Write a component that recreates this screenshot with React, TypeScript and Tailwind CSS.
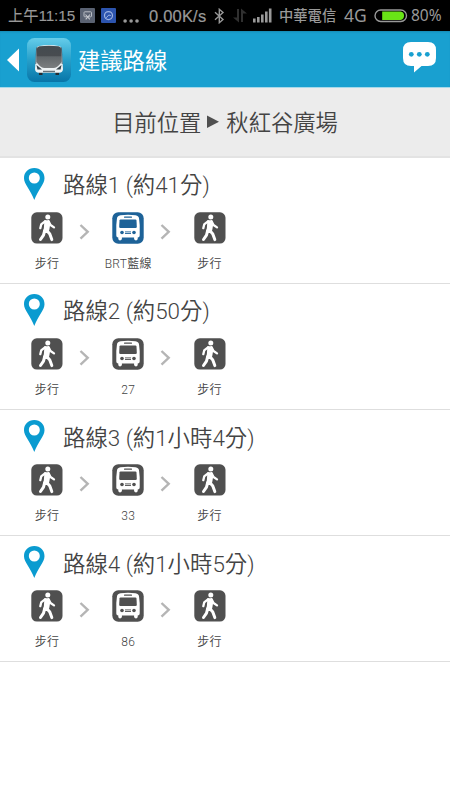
import { Fragment } from 'react';

type Step = { kind: 'walk' | 'bus' | 'brt'; label: string };

const walk: Step = { kind: 'walk', label: '步行' };

const routes: { title: string; steps: Step[] }[] = [
    { title: '路線1 (約41分)', steps: [walk, { kind: 'brt', label: 'BRT藍線' }, walk] },
    { title: '路線2 (約50分)', steps: [walk, { kind: 'bus', label: '27' }, walk] },
    { title: '路線3 (約1小時4分)', steps: [walk, { kind: 'bus', label: '33' }, walk] },
    { title: '路線4 (約1小時5分)', steps: [walk, { kind: 'bus', label: '86' }, walk] },
];

const WalkIcon = () => (
    <svg viewBox="0 0 32 32" className="size-8">
        <rect x="0.3" y="0.3" width="31.2" height="31.2" rx="5.5" fill="#505050" />
        <circle cx="16.8" cy="4.9" r="2.5" fill="#fff" />
        <path d="M13.4 8.3h4.6l1.3 3.8-1 5.6-1 3.3h-5.2l.8-5.5z" fill="#fff" />
        <g fill="none" stroke="#fff" strokeLinecap="round" strokeLinejoin="round">
            <path d="M14 9.3l-3.8 3.1-.9 3.8" strokeWidth="2.3" />
            <path d="M17.6 9.3l1.9 3.7 3.5 2.4" strokeWidth="2.3" />
            <path d="M13.7 18.5l-1.2 4.6-3 4.4" strokeWidth="3" />
            <path d="M15.8 18.5l3 3.5 2 5.6" strokeWidth="3" />
        </g>
    </svg>
);

const BusIcon = ({ color }: { color: string }) => (
    <svg viewBox="0 0 32 32" className="size-8">
        <rect x="0.3" y="0.3" width="31.4" height="31.4" rx="6" fill={color} />
        <path
            d="M8.5 3.2Q16 2.2 23.5 3.2Q27 3.7 27.1 7L27.7 13V23.4Q27.7 25.4 25.7 25.4V27Q25.4 28.4 24 28.4Q22.5 28.4 22.1 27V25.4H9.9V27Q9.5 28.4 8 28.4Q6.6 28.4 6.3 27V25.4Q4.3 25.4 4.3 23.4V13L4.9 7Q5 3.7 8.5 3.2Z"
            fill="#fff"
        />
        <rect x="12" y="4.6" width="8" height="1.1" rx=".5" fill={color} />
        <path d="M8.6 7.6H23.4Q24.4 7.6 24.5 8.6L24.8 14.8Q24.8 16 23.6 16H8.4Q7.2 16 7.2 14.8L7.5 8.6Q7.6 7.6 8.6 7.6Z" fill={color} />
        <circle cx="10" cy="20.5" r="1.8" fill={color} />
        <circle cx="22" cy="20.5" r="1.8" fill={color} />
        <path d="M13 19.9h6M13 21.5h6" stroke={color} strokeWidth=".9" />
    </svg>
);

const StatusBar = () => (
    <div className="flex h-[31px] items-center overflow-hidden bg-black pl-[8px] font-['Liberation_Sans','Noto_Sans_CJK_TC',sans-serif] text-[15.5px] whitespace-nowrap text-[#999]">
        <span className="mt-[2px] w-[72px] text-[15.3px] tracking-[-0.1px] [-webkit-text-stroke:0.1px_#999]">上午11:15</span>
        <svg viewBox="0 0 15 15" className="size-[15px] shrink-0">
            <rect width="15" height="15" rx="1" fill="#5a6272" />
            <rect x="4" y="3.8" width="7.5" height="5" rx=".8" fill="none" stroke="#b9bdc4" />
            <path d="M5.5 6.5l4.3 4.8M10 6.5l-4.3 4.8" stroke="#c5c8ce" strokeWidth="1.1" />
        </svg>
        <svg viewBox="0 0 15 15" className="ml-[6px] size-[15px] shrink-0">
            <rect width="15" height="15" rx="1" fill="#2c54ae" />
            <circle cx="7.5" cy="7.6" r="4" fill="none" stroke="#9fb4e2" strokeWidth="1.2" />
            <path d="M5.2 9.8L7.8 7l2 .6" fill="none" stroke="#9fb4e2" />
        </svg>
        <svg viewBox="0 0 16 4" className="mt-[11px] ml-[7px] h-1 w-4 shrink-0" fill="#999">
            <circle cx="2.1" cy="2" r="1.8" />
            <circle cx="8.1" cy="2" r="1.8" />
            <circle cx="14" cy="2" r="1.8" />
        </svg>
        <span className="mt-[2px] ml-[10px] w-[65px] text-[16.5px] tracking-[0.2px] [-webkit-text-stroke:0.2px_#999]">0.00K/s</span>
        <svg viewBox="0 0 11 16" className="h-4 w-[11px] shrink-0" fill="none" stroke="#999" strokeWidth="1.4">
            <path d="M1 4.2l8 7.2-3.7 3.3V1.3L9 4.6 1 11.8" />
        </svg>
        <svg viewBox="0 0 14 15" className="ml-[8px] h-[15px] w-[14px] shrink-0" fill="#303030">
            <path d="M4 1h2v13.5L0 9.5h4zM8 14V.5l6 5h-4V14z" />
        </svg>
        <svg viewBox="0 0 19 15" className="ml-[6px] h-[15px] w-[19px] shrink-0" fill="#999">
            <path d="M0 10.5h2.6V14.5H0zM4 9h2.6v5.5H4zM8 6.5h2.6v8H8zM12 3.5h2.6v11H12zM15.9 .5h2.6v14h-2.6z" />
        </svg>
        <span className="mt-[2px] ml-[7px] w-[65px] text-[14.3px] font-medium">中華電信</span>
        <span className="w-[30px] font-['Noto_Sans',sans-serif] text-[17.5px]">4G</span>
        <svg viewBox="0 0 34 14" className="h-[14px] w-[34px] shrink-0">
            <rect x="1" y="1" width="31.5" height="11.5" rx="5.7" fill="none" stroke="#999" strokeWidth="1.4" />
            <path d="M8.2 2.6H26.5A4.2 4.2 0 0 1 26.5 10.9H8.2z" fill="#69e516" />
        </svg>
        <span className="mt-[1px] ml-[3px] font-['Noto_Sans',sans-serif] text-[15.5px]">80%</span>
    </div>
);

const Header = () => (
    <div className="flex h-[57px] items-center border-b border-[#a6d9ea] bg-[#19a0d0] pt-[2px] pl-[7px] shadow-[inset_0_2px_2px_-1px_#1689b3]">
        <svg viewBox="0 0 12 24" className="h-6 w-3" fill="#fff">
            <path d="M0 12L12 .5v23z" />
        </svg>
        <svg viewBox="0 0 44 44" className="ml-[8px] size-11">
            <defs>
                <linearGradient id="tile" x2="0" y2="1">
                    <stop stopColor="#66cdea" />
                    <stop offset=".5" stopColor="#269fc9" />
                    <stop offset="1" stopColor="#0875a8" />
                </linearGradient>
                <linearGradient id="glass" x2="0" y2="1">
                    <stop stopColor="#444b50" />
                    <stop offset=".45" stopColor="#484c50" />
                    <stop offset=".5" stopColor="#62676a" />
                    <stop offset="1" stopColor="#7b7e80" />
                </linearGradient>
            </defs>
            <rect width="44" height="44" rx="7.5" fill="url(#tile)" />
            <path d="M12 34h3.5v3H12zM28.5 34H32v3h-3.5z" fill="#252b30" />
            <path d="M12 8Q22 6 32 8Q34.5 8.5 34.7 12L36 31Q36 34.5 32 34.8H12Q8 34.5 8 31L9.3 12Q9.5 8.5 12 8Z" fill="#edf2f4" />
            <path d="M12.5 8.3Q22 7 31.5 8.3Q34.2 8.8 34.3 11.5L34.6 24Q31 29.5 27 30H17Q13 29.5 9.4 24L9.7 11.5Q9.8 8.8 12.5 8.3Z" fill="url(#glass)" />
            <path d="M9.6 9.5L8.8 26M34.4 9.5L35.2 26" stroke="#2c3f4c" strokeWidth=".7" />
            <path d="M9.5 27l5.5 4.5h-4.6zM34.5 27L29 31.5h4.6z" fill="#38444b" />
            <path d="M16 33.5h12" stroke="#68737a" strokeWidth="1.5" />
        </svg>
        <h1 className="mt-[3px] ml-[7px] text-[22.3px] text-white">建議路線</h1>
        <svg viewBox="0 0 33 31" className="mr-[14px] mb-[5px] ml-auto h-[31px] w-[33px]">
            <path d="M8 0h17q8 0 8 8v8q0 8-8 8h-6.5L11 30.5V24H8q-8 0-8-8V8q0-8 8-8z" fill="#fff" />
            <g fill="#19a0d0">
                <circle cx="8.3" cy="12.3" r="2.4" />
                <circle cx="16.3" cy="12.3" r="2.4" />
                <circle cx="24.3" cy="12.3" r="2.4" />
            </g>
        </svg>
    </div>
);

const RouteRow = ({ title, steps }: { title: string; steps: Step[] }) => (
    <li className="h-[126.15px] border-b-[1.5px] border-[#dedede]">
        <div className="flex h-[54px] items-center pl-[24px]">
            <svg viewBox="0 0 21 32" className="mb-[2px] h-8 w-[21px]">
                <path d="M10.3 0C16.5 0 20.5 4.3 20.5 10.2C20.5 16 14 22 10.3 32C6.6 22 0 16 0 10.2C0 4.3 4.1 0 10.3 0Z" fill="#0a9bd0" />
                <circle cx="10.3" cy="10" r="5.5" fill="#fff" />
            </svg>
            <h2 className="mt-[2px] ml-[18px] text-[22.4px] leading-none font-[350]">{title}</h2>
        </div>
        <div className="flex pl-[15px]">
            {steps.map((step, i) => (
                <Fragment key={i}>
                    {i > 0 && (
                        <svg viewBox="0 0 17.25 32" className="h-8 w-[17.25px]" fill="none" stroke="#b5b5b5" strokeWidth="2.4">
                            <path d="M1.5 13l7.2 6.8-7.2 6.8" />
                        </svg>
                    )}
                    <div className="flex w-16 flex-col items-center text-[12px] leading-4 font-[350] whitespace-nowrap">
                        {step.kind === 'walk' ? <WalkIcon /> : <BusIcon color={step.kind === 'brt' ? '#1d6298' : '#505050'} />}
                        <span className="mt-[12px] tracking-[0.3px]">{step.label}</span>
                    </div>
                </Fragment>
            ))}
        </div>
    </li>
);

const App = () => {
    return (
        <div className="h-[800px] w-[450px] overflow-hidden bg-white font-['Roboto','Noto_Sans_CJK_TC',sans-serif] text-[#444]">
            <StatusBar />
            <Header />
            <div className="flex h-[69.5px] items-center justify-center border-b-2 border-[#e3e3e3] bg-[#ececec] pt-[4px] text-[22.3px] font-[350]">
                <span>目前位置</span>
                <svg viewBox="0 0 12 14" className="mr-[7px] mb-[3px] ml-[6px] h-[14px] w-3" fill="#505050">
                    <path d="M0 .5l12 6.3L0 13z" />
                </svg>
                <span>秋紅谷廣場</span>
            </div>
            <ul>
                {routes.map((route) => (
                    <RouteRow key={route.title} {...route} />
                ))}
            </ul>
        </div>
    );
};

export default App;
